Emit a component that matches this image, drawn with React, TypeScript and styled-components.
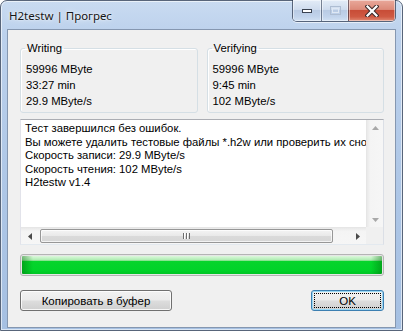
import React from 'react';
import styled, { createGlobalStyle } from 'styled-components';

const GlobalStyle = createGlobalStyle`
  html,
  body {
    margin: 0;
    padding: 0;
    background: #ffffff;
  }
  body {
    font-family: "Liberation Sans", Arial, sans-serif;
  }
`;

const Window = styled.div`
  box-sizing: border-box;
  width: 403px;
  height: 331px;
  display: flex;
  flex-direction: column;
  padding: 0 6px 2px;
  border: 1px solid #58657a;
  border-radius: 7px 7px 0 0;
  background: linear-gradient(180deg, #c9dbf1 0%, #bcd1ec 10%, #adc6e6 60%, #a6c0e2 100%);
  box-shadow: inset 0 0 0 1px rgba(255, 255, 255, 0.6);
`;

const TitleBar = styled.div`
  height: 28px;
  display: flex;
  align-items: flex-start;
  flex-shrink: 0;
`;

const Title = styled.div`
  padding: 7px 0 0 2px;
  font-family: "Noto Sans", "Liberation Sans", sans-serif;
  font-size: 11.5px;
  line-height: 16px;
  color: #161616;
  text-shadow: 0 0 6px rgba(255, 255, 255, 0.9), 0 0 2px rgba(255, 255, 255, 0.8);
`;

const CaptionGroup = styled.div`
  margin-left: auto;
  margin-top: -1px;
  display: flex;
  height: 21px;
  border: 1px solid rgba(50, 62, 84, 0.75);
  border-top: none;
  border-radius: 0 0 5px 5px;
  overflow: hidden;
  box-shadow: 0 1px 0 rgba(255, 255, 255, 0.6);
`;

const CaptionButton = styled.div<{ $w: number; $close?: boolean }>`
  width: ${(p) => p.$w}px;
  display: flex;
  align-items: center;
  justify-content: center;
  box-shadow: inset 0 0 0 1px rgba(255, 255, 255, 0.45);
  background: ${(p) =>
    p.$close
      ? 'linear-gradient(180deg, #e9a99b 0%, #dc8a79 45%, #c84d37 50%, #cf5a43 80%, #e08a74 100%)'
      : 'linear-gradient(180deg, #e3ecf7 0%, #cfdcee 45%, #b9cbe4 50%, #c2d4ec 80%, #d2e1f3 100%)'};
  & + & {
    border-left: 1px solid rgba(50, 62, 84, 0.6);
  }
`;

const Client = styled.div`
  flex: 1;
  box-sizing: border-box;
  display: flex;
  flex-direction: column;
  padding: 11px 11px 0 12px;
  border: 1px solid #8597b0;
  background: #f0f0f0;
  font-size: 11.3px;
  color: #000000;
`;

const Groups = styled.div`
  display: grid;
  grid-template-columns: 1fr 1fr;
  gap: 9px;
`;

const GroupBox = styled.fieldset`
  margin: 0;
  min-width: 0;
  padding: 5px 5px 3px;
  border: 1px solid #d5dfe5;
  border-radius: 3px;
  box-shadow: inset 1px 1px 0 #ffffff;
`;

const Legend = styled.legend`
  margin-left: -1px;
  padding: 0 2px;
  font-size: 11.3px;
  line-height: 15px;
  color: #000000;
`;

const Stat = styled.div`
  line-height: 16px;
  white-space: nowrap;
`;

const Memo = styled.div`
  margin-top: 6px;
  height: 126px;
  box-sizing: border-box;
  display: grid;
  grid-template-columns: 1fr 17px;
  grid-template-rows: 1fr 17px;
  border: 1px solid;
  border-color: #abadb3 #dbdfe6 #e3e9ef #e2e3ea;
  background: #ffffff;
`;

const MemoText = styled.div`
  padding: 2px 0 0 4px;
  line-height: 13.6px;
  white-space: pre;
  overflow: hidden;
`;

const VScroll = styled.div`
  display: flex;
  flex-direction: column;
  justify-content: space-between;
  align-items: center;
  padding: 6px 0 5px;
  background: linear-gradient(90deg, #e9e9e9 0%, #f4f4f4 20%, #f6f6f6 100%);
  border-left: 1px solid #e6e6e6;
`;

const HScroll = styled.div`
  display: flex;
  align-items: center;
  background: linear-gradient(180deg, #e9e9e9 0%, #f4f4f4 20%, #f6f6f6 100%);
  border-top: 1px solid #e6e6e6;
`;

const ArrowCell = styled.div`
  width: 17px;
  height: 16px;
  display: flex;
  align-items: center;
  justify-content: center;
  flex-shrink: 0;
`;

const Track = styled.div`
  flex: 1;
  height: 100%;
  display: flex;
  align-items: center;
`;

const Thumb = styled.div`
  margin-left: 2px;
  width: 293px;
  height: 14px;
  box-sizing: border-box;
  display: flex;
  align-items: center;
  justify-content: center;
  border: 1px solid #979797;
  border-radius: 2px;
  background: linear-gradient(180deg, #f4f4f4 0%, #e9e9e9 48%, #dadada 52%, #d6d6d6 100%);
  box-shadow: inset 0 0 0 1px rgba(255, 255, 255, 0.7);
`;

const Grip = styled.div`
  width: 7px;
  height: 6px;
  background: repeating-linear-gradient(90deg, #6d6d6d 0 1px, #ffffff 1px 2px, transparent 2px 3px);
`;

const Corner = styled.div`
  background: #f0f0f0;
`;

const Progress = styled.div`
  margin-top: 9px;
  height: 22px;
  box-sizing: border-box;
  border: 1px solid #b4b4b4;
  border-radius: 3px;
  padding: 1px;
  background: #e6e6e6;
`;

const ProgressFill = styled.div`
  height: 100%;
  border-radius: 1px;
  background:
    linear-gradient(90deg, rgba(0, 110, 10, 0.45) 0, rgba(0, 110, 10, 0) 11px, rgba(0, 110, 10, 0) calc(100% - 11px), rgba(0, 110, 10, 0.45) 100%),
    linear-gradient(180deg, #dcf8dc 0%, #b3eeb6 20%, #7fe289 26%, #06d42c 30%, #00d329 80%, #00c525 100%);
`;

const ButtonRow = styled.div`
  margin-top: 14px;
  display: flex;
  justify-content: space-between;
`;

const Button = styled.div<{ $w: number; $default?: boolean }>`
  width: ${(p) => p.$w}px;
  height: 21px;
  box-sizing: border-box;
  display: flex;
  align-items: center;
  justify-content: center;
  border: 1px solid ${(p) => (p.$default ? '#3c7fb1' : '#707070')};
  border-radius: 3px;
  background: linear-gradient(180deg, #f2f2f2 0%, #ebebeb 48%, #dddddd 52%, #cfcfcf 100%);
  box-shadow: inset 0 0 0 1px ${(p) => (p.$default ? '#9ad8f5' : 'rgba(255, 255, 255, 0.8)')};
  font-size: 11.5px;
  color: #000000;
`;

const FocusRect = styled.div`
  position: absolute;
  inset: 2px;
  border: 1px dotted #000000;
`;

const OkButton = styled(Button)`
  position: relative;
`;

function ArrowIcon({ dir, color }: { dir: 'up' | 'down' | 'left' | 'right'; color: string }) {
  const pts = {
    up: '0,4 7,4 3.5,0',
    down: '0,0 7,0 3.5,4',
    left: '4,0 4,7 0,3.5',
    right: '0,0 0,7 4,3.5',
  }[dir];
  const vertical = dir === 'up' || dir === 'down';
  return (
    <svg width={vertical ? 7 : 4} height={vertical ? 4 : 7} viewBox={vertical ? '0 0 7 4' : '0 0 4 7'}>
      <polygon points={pts} fill={color} />
    </svg>
  );
}

const lines = [
  'Тест завершился без ошибок.',
  'Вы можете удалить тестовые файлы *.h2w или проверить их снова.',
  'Скорость записи: 29.9 MByte/s',
  'Скорость чтения: 102 MByte/s',
  'H2testw v1.4',
];

export default function App(): React.ReactElement {
  return (
    <>
      <GlobalStyle />
      <Window>
        <TitleBar>
          <Title>H2testw | Прогрес</Title>
          <CaptionGroup>
            <CaptionButton $w={28}>
              <svg width="12" height="6" viewBox="0 0 12 6">
                <rect x="1.5" y="1.5" width="9" height="3" fill="#ffffff" stroke="#3a4250" strokeWidth="1" />
              </svg>
            </CaptionButton>
            <CaptionButton $w={26}>
              <svg width="11" height="9" viewBox="0 0 11 9">
                <rect x="0.5" y="0.5" width="10" height="8" fill="none" stroke="#aebdd2" strokeWidth="1" />
                <rect x="2.5" y="2.5" width="6" height="4" fill="none" stroke="#dfe8f4" strokeWidth="1" />
              </svg>
            </CaptionButton>
            <CaptionButton $w={46} $close>
              <svg width="14" height="12" viewBox="0 0 14 12">
                <path d="M2.5 1.5 L11.5 10.5 M11.5 1.5 L2.5 10.5" stroke="#3a2a2a" strokeWidth="4.2" strokeLinecap="square" />
                <path d="M2.5 1.5 L11.5 10.5 M11.5 1.5 L2.5 10.5" stroke="#ffffff" strokeWidth="2.2" strokeLinecap="square" />
              </svg>
            </CaptionButton>
          </CaptionGroup>
        </TitleBar>
        <Client>
          <Groups>
            <GroupBox>
              <Legend>Writing</Legend>
              <Stat>59996 MByte</Stat>
              <Stat>33:27 min</Stat>
              <Stat>29.9 MByte/s</Stat>
            </GroupBox>
            <GroupBox>
              <Legend>Verifying</Legend>
              <Stat>59996 MByte</Stat>
              <Stat>9:45 min</Stat>
              <Stat>102 MByte/s</Stat>
            </GroupBox>
          </Groups>
          <Memo>
            <MemoText>{lines.join('\n')}</MemoText>
            <VScroll>
              <ArrowIcon dir="up" color="#a8a8a8" />
              <ArrowIcon dir="down" color="#a8a8a8" />
            </VScroll>
            <HScroll>
              <ArrowCell>
                <ArrowIcon dir="left" color="#4a4a4a" />
              </ArrowCell>
              <Track>
                <Thumb>
                  <Grip />
                </Thumb>
              </Track>
              <ArrowCell>
                <ArrowIcon dir="right" color="#4a4a4a" />
              </ArrowCell>
            </HScroll>
            <Corner />
          </Memo>
          <Progress>
            <ProgressFill />
          </Progress>
          <ButtonRow>
            <Button $w={152}>Копировать в буфер</Button>
            <OkButton $w={73} $default>
              <FocusRect />
              OK
            </OkButton>
          </ButtonRow>
        </Client>
      </Window>
    </>
  );
}
